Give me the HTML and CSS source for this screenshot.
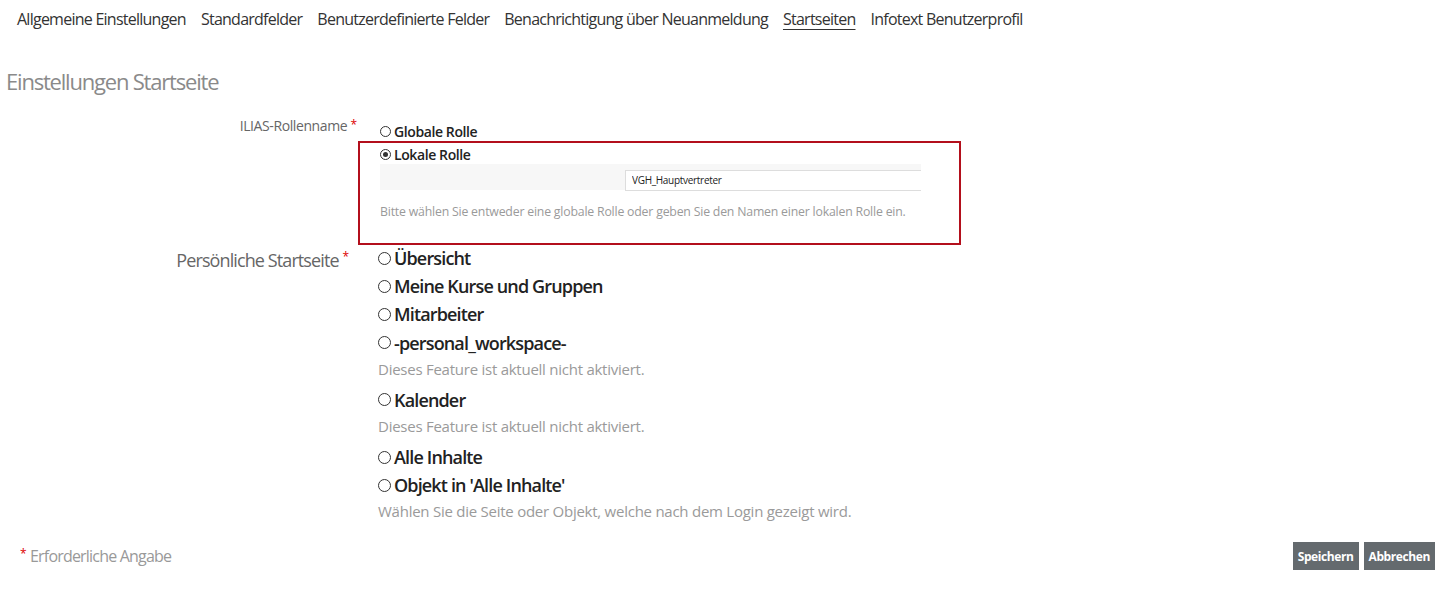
FILE: index.html
```html
<!DOCTYPE html>
<html lang="de">
<head>
    <meta charset="UTF-8">
    <title>Startseiten</title>
    <link rel="stylesheet" href="styles.css">
</head>
<body>
    <div class="tabs">
        <a href="#">Allgemeine Einstellungen</a>
        <a href="#">Standardfelder</a>
        <a href="#">Benutzerdefinierte Felder</a>
        <a href="#">Benachrichtigung über Neuanmeldung</a>
        <a href="#" class="active">Startseiten</a>
        <a href="#">Infotext Benutzerprofil</a>
    </div>

    <h2 class="form-title">Einstellungen Startseite</h2>

    <div class="form-row row-role">
        <div class="form-label small">ILIAS-Rollenname <span class="req">*</span></div>
        <div class="form-field">
            <label class="radio small"><span class="circle"></span>Globale Rolle</label>
            <div class="highlight">
                <label class="radio small"><span class="circle checked"></span>Lokale Rolle</label>
                <div class="sub-panel">
                    <input type="text" class="role-input" value="VGH_Hauptvertreter">
                </div>
                <div class="help small-help">Bitte wählen Sie entweder eine globale Rolle oder geben Sie den Namen einer lokalen Rolle ein.</div>
            </div>
        </div>
    </div>

    <div class="form-row row-start">
        <div class="form-label big">Persönliche Startseite <span class="req">*</span></div>
        <div class="form-field">
            <label class="radio big"><span class="circle"></span>Übersicht</label>
            <label class="radio big"><span class="circle"></span>Meine Kurse und Gruppen</label>
            <label class="radio big"><span class="circle"></span>Mitarbeiter</label>
            <label class="radio big"><span class="circle"></span>-personal_workspace-</label>
            <div class="help">Dieses Feature ist aktuell nicht aktiviert.</div>
            <label class="radio big"><span class="circle"></span>Kalender</label>
            <div class="help">Dieses Feature ist aktuell nicht aktiviert.</div>
            <label class="radio big"><span class="circle"></span>Alle Inhalte</label>
            <label class="radio big"><span class="circle"></span>Objekt in 'Alle Inhalte'</label>
            <div class="help">Wählen Sie die Seite oder Objekt, welche nach dem Login gezeigt wird.</div>
        </div>
    </div>

    <div class="form-footer">
        <div class="required-note"><span class="req">*</span> Erforderliche Angabe</div>
        <div class="buttons">
            <button>Speichern</button>
            <button>Abbrechen</button>
        </div>
    </div>
</body>
</html>
```

FILE: styles.css
```css
body {
    font-family: 'Open Sans', sans-serif;
    margin: 0;
    padding: 0;
    background: #ffffff;
    color: #333;
}
.tabs {
    display: flex;
    gap: 15px;
    padding: 8px 0 0 17px;
    height: 32px;
    font-size: 16px;
    letter-spacing: -0.75px;
}
.tabs a {
    color: #333;
    text-decoration: none;
}
.tabs a.active {
    text-decoration: underline;
    text-underline-offset: 4px;
}
.form-title {
    font-size: 22px;
    font-weight: normal;
    color: #8a8a8a;
    margin: 26px 0 20px 6px;
    letter-spacing: -1.2px;
}
.form-row {
    display: flex;
}
.form-label {
    width: 360px;
    text-align: right;
    color: #666;
    flex-shrink: 0;
}
.form-label.small {
    font-size: 14px;
    letter-spacing: -0.4px;
    padding-right: 3px;
    box-sizing: border-box;
}
.form-label.big {
    font-size: 18px;
    letter-spacing: -0.9px;
    padding-right: 11px;
    box-sizing: border-box;
    padding-top: 4px;
}
.req {
    color: #d00;
    font-size: 12px;
    vertical-align: top;
    letter-spacing: 0;
}
.form-field {
    padding-left: 20px;
}
.row-role .form-field {
    padding-top: 5px;
}
.radio {
    display: flex;
    align-items: center;
    font-weight: 600;
    color: #222;
}
.radio.small {
    font-size: 14px;
    height: 20px;
    letter-spacing: -0.4px;
}
.radio.big {
    font-size: 18px;
    height: 28.2px;
    margin-left: -2px;
    letter-spacing: -0.85px;
}
.circle {
    display: inline-block;
    box-sizing: border-box;
    border: 1px solid #333;
    border-radius: 50%;
    margin-right: 3px;
    position: relative;
}
.radio.small .circle {
    width: 11px;
    height: 11px;
}
.radio.big .circle {
    width: 13px;
    height: 13px;
}
.circle.checked::after {
    content: '';
    position: absolute;
    left: 2px;
    top: 2px;
    width: 5px;
    height: 5px;
    border-radius: 50%;
    background: #333;
}
.highlight {
    border: 2px solid #b30f1c;
    margin-left: -22px;
    padding: 1px 38px 23px 20px;
    width: 541px;
}
.sub-panel {
    background: #f7f7f7;
    height: 26px;
    padding: 3px 0 0 245px;
    box-sizing: border-box;
    margin-top: 0;
}
.role-input {
    width: 296px;
    height: 21px;
    box-sizing: border-box;
    border: 1px solid #ddd;
    border-right: none;
    font-family: 'Open Sans', sans-serif;
    font-size: 10px;
    letter-spacing: -0.3px;
    padding: 0 6px;
    color: #222;
}
.help {
    color: #9a9a9a;
    font-size: 15px;
    letter-spacing: -0.25px;
    height: 29px;
    line-height: 25px;
    margin-left: -2px;
}
.help.small-help {
    font-size: 12.3px;
    height: auto;
    line-height: 16px;
    margin-top: 14px;
    margin-left: 0;
    letter-spacing: -0.2px;
}
.row-start {
    margin-top: -1px;
}
.form-footer {
    display: flex;
    justify-content: space-between;
    align-items: center;
    padding: 14px 12px 0 20px;
}
.required-note {
    color: #999;
    font-size: 16px;
    letter-spacing: -0.8px;
}
.buttons {
    display: flex;
    gap: 5px;
}
.buttons button {
    background: #646a6e;
    color: #fff;
    border: none;
    font-family: 'Open Sans', sans-serif;
    font-weight: bold;
    font-size: 12px;
    letter-spacing: -0.4px;
    height: 28px;
    padding: 0 5px;
}
```
